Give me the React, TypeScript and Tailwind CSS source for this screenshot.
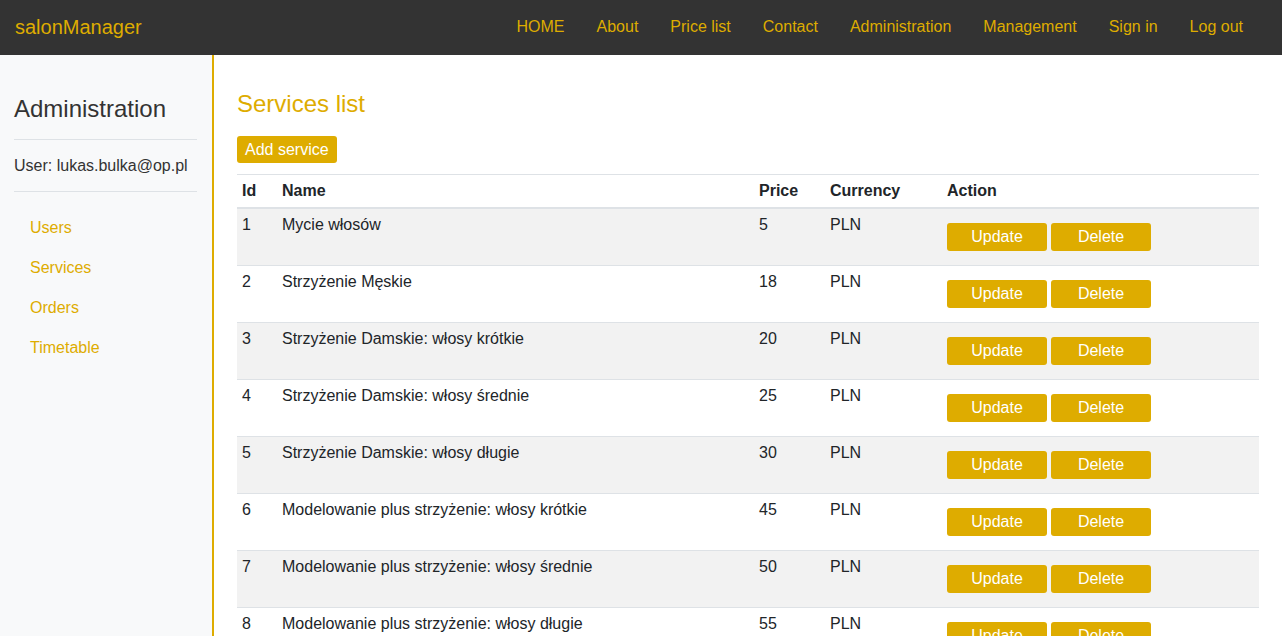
const services = [
  { id: 1, name: "Mycie włosów", price: 5 },
  { id: 2, name: "Strzyżenie Męskie", price: 18 },
  { id: 3, name: "Strzyżenie Damskie: włosy krótkie", price: 20 },
  { id: 4, name: "Strzyżenie Damskie: włosy średnie", price: 25 },
  { id: 5, name: "Strzyżenie Damskie: włosy długie", price: 30 },
  { id: 6, name: "Modelowanie plus strzyżenie: włosy krótkie", price: 45 },
  { id: 7, name: "Modelowanie plus strzyżenie: włosy średnie", price: 50 },
  { id: 8, name: "Modelowanie plus strzyżenie: włosy długie", price: 55 },
  { id: 9, name: "Farbowanie", price: 60 },
];

const navLinks = ["HOME", "About", "Price list", "Contact", "Administration", "Management", "Sign in", "Log out"];
const sideLinks = ["Users", "Services", "Orders", "Timetable"];

const App: React.FC = () => {
  return (
    <div className="h-[636px] overflow-hidden flex flex-col font-['Liberation_Sans',Arial,sans-serif] text-[16px] text-[#212529]">
      <nav className="h-[55px] shrink-0 bg-[#333333] flex items-center justify-between pl-[15px] pr-[23px] pb-[2px]">
        <a className="text-[20px] text-[#deac00] leading-[30px]">salonManager</a>
        <ul className="flex">
          {navLinks.map((l) => (
            <li key={l}>
              <a className="block px-4 leading-[24px] text-[#deac00]">{l}</a>
            </li>
          ))}
        </ul>
      </nav>

      <div className="flex flex-1 min-h-0">
        <aside className="w-[214px] shrink-0 bg-[#f8f9fa] border-r-2 border-[#deac00] pl-[14px] pr-[15px] pt-[39px]">
          <h4 className="text-[24px] leading-[30px] text-[#333]">Administration</h4>
          <hr className="mt-[15px] border-[#dee2e6]" />
          <p className="mt-[14px] leading-[24px] text-[#333]">User: lukas.bulka@op.pl</p>
          <hr className="mt-[13px] border-[#dee2e6]" />
          <ul className="mt-[16px]">
            {sideLinks.map((l) => (
              <li key={l}>
                <a className="block pl-4 py-2 leading-[24px] text-[#deac00]">{l}</a>
              </li>
            ))}
          </ul>
        </aside>

        <main className="flex-1 pl-[23px] pr-[23px] pt-[34px]">
          <h2 className="text-[24px] leading-[30px] text-[#deac00]">Services list</h2>
          <button className="mt-[17px] h-[27px] px-2 rounded-[3px] bg-[#deac00] text-white leading-[27px]">
            Add service
          </button>
          <table className="mt-[11px] w-full border-t border-[#dee2e6] border-collapse text-left">
            <thead>
              <tr className="border-b-2 border-[#dee2e6]">
                <th className="w-[40px] px-[5px] py-[6px] leading-[20px] font-bold">Id</th>
                <th className="w-[477px] px-[5px] py-[6px] leading-[20px] font-bold">Name</th>
                <th className="w-[71px] px-[5px] py-[6px] leading-[20px] font-bold">Price</th>
                <th className="w-[117px] px-[5px] py-[6px] leading-[20px] font-bold">Currency</th>
                <th className="px-[5px] py-[6px] leading-[20px] font-bold">Action</th>
              </tr>
            </thead>
            <tbody>
              {services.map((s, i) => (
                <tr key={s.id} className={`border-b border-[#dee2e6] ${i % 2 === 0 ? "bg-[#f2f2f2]" : "bg-white"}`}>
                  <td className="h-[57px] align-top px-[5px] pt-[6px] leading-[20px]">{s.id}</td>
                  <td className="align-top px-[5px] pt-[6px] leading-[20px]">{s.name}</td>
                  <td className="align-top px-[5px] pt-[6px] leading-[20px]">{s.price}</td>
                  <td className="align-top px-[5px] pt-[6px] leading-[20px]">PLN</td>
                  <td className="align-top px-[5px] pt-[14px]">
                    <div className="flex gap-1">
                      <button className="w-[100px] h-[28px] rounded-[3px] bg-[#deac00] text-white leading-[28px]">Update</button>
                      <button className="w-[100px] h-[28px] rounded-[3px] bg-[#deac00] text-white leading-[28px]">Delete</button>
                    </div>
                  </td>
                </tr>
              ))}
            </tbody>
          </table>
        </main>
      </div>
    </div>
  );
};

export default App;
